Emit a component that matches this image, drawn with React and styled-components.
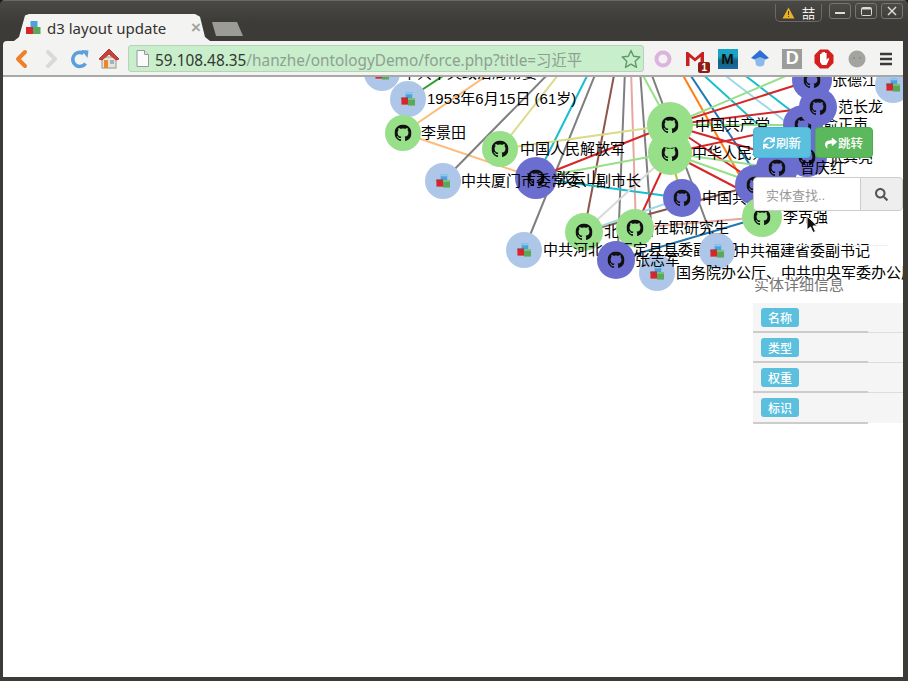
import React from "react";
import styled, { createGlobalStyle } from "styled-components";
import { FaSync, FaShare, FaSearch } from "react-icons/fa";

const GlobalStyle = createGlobalStyle`
  html, body { margin: 0; padding: 0; background: #1c1b19; overflow: hidden; }
  body { font-family: "Liberation Sans", "Noto Sans CJK SC", sans-serif; }
  * { box-sizing: border-box; }
`;

const GITHUB_PATH =
  "M8 0C3.58 0 0 3.58 0 8c0 3.54 2.29 6.53 5.47 7.59.4.07.55-.17.55-.38 0-.19-.01-.82-.01-1.49-2.01.37-2.53-.49-2.69-.94-.09-.23-.48-.94-.82-1.13-.28-.15-.68-.52-.01-.53.63-.01 1.08.58 1.23.82.72 1.21 1.87.87 2.33.66.07-.52.28-.87.51-1.07-1.78-.2-3.64-.89-3.64-3.95 0-.87.31-1.59.82-2.15-.08-.2-.36-1.02.08-2.12 0 0 .67-.21 2.2.82.64-.18 1.32-.27 2-.27.68 0 1.36.09 2 .27 1.53-1.04 2.2-.82 2.2-.82.44 1.1.16 1.92.08 2.12.51.56.82 1.27.82 2.15 0 3.07-1.87 3.75-3.65 3.95.29.25.54.73.54 1.48 0 1.07-.01 1.93-.01 2.2 0 .21.15.46.55.38A8.013 8.013 0 0016 8c0-4.42-3.58-8-8-8z";

// window chrome
const Frame = styled.div`
  width: 908px;
  height: 681px;
  display: flex;
  flex-direction: column;
  background: #3c3b37;
  border-radius: 5px 5px 0 0;
  overflow: hidden;
`;
const TitleBar = styled.div`
  height: 41px;
  flex: none;
  position: relative;
  display: flex;
  align-items: flex-end;
  padding-left: 14px;
  border-top: 1px solid #6a6964;
  background: linear-gradient(#4a4945, #3c3b37 22px);
`;
const Tab = styled.div`
  width: 196px;
  height: 27px;
  display: flex;
  align-items: center;
  gap: 6px;
  padding: 0 9px 0 11px;
  background: #f3f3f2;
  clip-path: polygon(0 100%, 5px 85%, 11px 6%, 15px 0, 181px 0, 186px 10%, 191px 85%, 196px 100%);
`;
const TabTitle = styled.span`
  flex: 1;
  font-family: "Noto Sans", sans-serif;
  font-size: 15px;
  color: #33322f;
  white-space: nowrap;
`;
const TabClose = styled.span`
  font-family: "Liberation Sans", sans-serif;
  font-size: 17px;
  font-weight: 700;
  color: #a3a3a0;
  line-height: 1;
`;
const NewTab = styled.div`
  width: 31px;
  height: 14px;
  margin: 0 0 5px 2px;
  background: #9b9c96;
  clip-path: polygon(4px 100%, 0 0, 25px 0, 31px 100%);
`;
const WindowButtons = styled.div`
  position: absolute;
  top: 2px;
  right: 5px;
  display: flex;
  gap: 4px;
`;
const AlertPill = styled.div`
  width: 47px;
  height: 18px;
  margin-right: 3px;
  margin-top: 1px;
  display: flex;
  align-items: center;
  justify-content: center;
  gap: 7px;
  border: 1px solid #6a6964;
  border-top: none;
  border-radius: 0 0 5px 5px;
  color: #f2f1ef;
  font-size: 13px;
`;
const WinButton = styled.div`
  width: 22px;
  height: 16px;
  display: flex;
  align-items: center;
  justify-content: center;
  border: 1px solid #77766f;
  border-radius: 3px;
  background: linear-gradient(#4c4b46, #403f3b);
`;
const Toolbar = styled.div`
  height: 36px;
  flex: none;
  margin: 0 5px 0 3px;
  display: flex;
  align-items: center;
  padding: 1px 0 0 7px;
  background: #f3f3f2;
  border-bottom: 2px solid #a8a8a6;
  border-radius: 4px 0 0 0;
`;
const NavIcons = styled.div`
  display: flex;
  align-items: center;
  gap: 8px;
  width: 118px;
  flex: none;
`;
const AddressBar = styled.div`
  width: 516px;
  height: 27px;
  flex: none;
  display: flex;
  align-items: center;
  gap: 6px;
  padding: 0 2px 0 7px;
  background: #c8eecb;
  border: 1px solid #b6d3b8;
  border-radius: 3px;
`;
const Url = styled.div`
  flex: 1;
  font-family: "Noto Sans", "Noto Sans CJK SC", sans-serif;
  font-size: 15.35px;
  color: #8f9f92;
  white-space: nowrap;
  overflow: hidden;
`;
const Host = styled.span`
  color: #33382f;
`;
const Extensions = styled.div`
  flex: 1;
  display: flex;
  align-items: center;
  justify-content: space-between;
  padding: 0 10px 0 9px;
`;
const ExtBox = styled.div`
  position: relative;
  width: ${(p) => p.$w || 20}px;
  height: 20px;
  display: flex;
  align-items: center;
  justify-content: center;
  font-weight: 700;
  font-size: ${(p) => p.$size || 16}px;
  color: ${(p) => p.$color || "#fff"};
  background: ${(p) => p.$bg || "transparent"};
`;
const MailBadge = styled.span`
  position: absolute;
  right: -5px;
  bottom: -4px;
  width: 12px;
  height: 11px;
  border-radius: 2px;
  background: #8e1d16;
  color: #fff;
  font-size: 10px;
  line-height: 11px;
  text-align: center;
`;

// page
const Viewport = styled.div`
  flex: 1;
  position: relative;
  margin: 0 5px 4px 3px;
  background: #fff;
  overflow: hidden;
`;
const GraphCanvas = styled.svg`
  position: absolute;
  left: 0;
  top: 0;
`;
const NodeLabel = styled.text`
  font-family: "Liberation Sans", "Noto Sans CJK SC", sans-serif;
  font-size: 15px;
  fill: #000;
`;
const SidePanel = styled.div`
  position: absolute;
  left: 750px;
  top: 50px;
  width: 150px;
`;
const ButtonRow = styled.div`
  display: flex;
  gap: 4px;
`;
const ActionButton = styled.button`
  width: 58px;
  height: 31px;
  padding: 0;
  display: flex;
  align-items: center;
  justify-content: center;
  gap: 1px;
  border: 1px solid ${(p) => p.$border};
  border-radius: 4px;
  background: ${(p) => p.$bg};
  color: #fff;
  font-family: inherit;
  font-size: 12.5px;
  font-weight: 500;
`;
const SearchGroup = styled.div`
  display: flex;
  height: 34px;
  margin-top: 19px;
`;
const SearchInput = styled.div`
  width: 108px;
  display: flex;
  align-items: center;
  padding-left: 12px;
  background: #fff;
  border: 1px solid #ccc;
  border-radius: 4px 0 0 4px;
  color: #999;
  font-size: 13px;
`;
const SearchButton = styled.div`
  flex: 1;
  display: flex;
  align-items: center;
  justify-content: center;
  margin-left: -1px;
  background: #eee;
  border: 1px solid #ccc;
  border-radius: 0 4px 4px 0;
  color: #555;
  font-size: 14px;
`;
const Rule = styled.div`
  width: 135px;
  height: 1px;
  margin-top: 34px;
  background: #eee;
`;
const DetailTitle = styled.div`
  margin: 30px 0 10px 1px;
  height: 17px;
  line-height: 17px;
  font-size: 15px;
  color: #777;
`;
const DetailRow = styled.div`
  position: relative;
  height: 30px;
  padding: 5px 0 0 8px;
  background: #f5f5f5;
  border-bottom: 1px solid #ddd;
  &:last-child {
    border-bottom: none;
  }
  &::after {
    content: "";
    position: absolute;
    left: 0;
    bottom: -1px;
    width: 115px;
    height: 2px;
    background: #ccc;
  }
`;
const Badge = styled.span`
  display: inline-flex;
  width: 38px;
  height: 19px;
  align-items: center;
  justify-content: center;
  border-radius: 3px;
  background: #5bc0de;
  color: #fff;
  font-size: 12px;
  font-weight: 500;
`;
const Pointer = styled.svg`
  position: absolute;
  left: 803px;
  top: 138px;
`;

const EDGES = [
  [408, 99, 452, 70, "#2ca02c"],
  [403, 133, 495, 70, "#ffbb78"],
  [403, 133, 536, 178, "#ffbb78"],
  [443, 181, 552, 70, "#7f7f7f"],
  [500, 149, 562, 70, "#dbdb8d"],
  [536, 178, 590, 70, "#17becf"],
  [524, 250, 597, 70, "#7f7f7f"],
  [584, 232, 615, 70, "#8c564b"],
  [625, 70, 618, 247, "#7f7f7f"],
  [631, 70, 636, 228, "#e6a89e"],
  [640, 70, 652, 237, "#7f7f7f"],
  [650, 70, 717, 251, "#7f7f7f"],
  [640, 70, 670, 125, "#98df8a"],
  [680, 70, 745, 185, "#ff7f0e"],
  [687, 70, 760, 180, "#1f77b4"],
  [698, 70, 775, 140, "#17becf"],
  [718, 70, 790, 125, "#9edae5"],
  [738, 70, 790, 110, "#17becf"],
  [670, 125, 812, 80, "#d62728"],
  [670, 125, 818, 107, "#d62728"],
  [670, 125, 800, 70, "#98df8a"],
  [670, 125, 803, 125, "#98df8a"],
  [670, 125, 790, 160, "#d62728"],
  [670, 153, 760, 185, "#98df8a"],
  [670, 125, 760, 185, "#d62728"],
  [670, 153, 760, 200, "#d62728"],
  [670, 153, 777, 168, "#98df8a"],
  [670, 153, 777, 130, "#d62728"],
  [536, 178, 670, 125, "#d62728"],
  [500, 149, 670, 125, "#dbdb8d"],
  [536, 178, 670, 153, "#98df8a"],
  [536, 178, 682, 198, "#17becf"],
  [584, 232, 670, 153, "#d9d9d9"],
  [635, 228, 670, 153, "#d62728"],
  [682, 198, 670, 153, "#bcbd22"],
  [584, 232, 755, 185, "#8c564b"],
  [584, 232, 682, 198, "#9edae5"],
  [635, 228, 762, 217, "#e6a89e"],
  [616, 260, 762, 217, "#1f77b4"],
];

const PURPLE = "#6b6ecf";
const GREEN = "#98df8a";
const BLUE = "#aec7e8";

// painted in this order, later ones lie over earlier ones
const NODES = [
  { x: 382, y: 73, r: 18, c: BLUE, kind: "cube", label: "中共中央政治局常委", lx: 402 },
  { x: 408, y: 99, r: 18, c: BLUE, kind: "cube", label: "1953年6月15日 (61岁)", lx: 427 },
  { x: 403, y: 133, r: 18, c: GREEN, label: "李景田", lx: 421 },
  { x: 500, y: 149, r: 18, c: GREEN, label: "中国人民解放军", lx: 520 },
  { x: 536, y: 178, r: 21, c: PURPLE, label: "张云山", lx: 556 },
  { x: 443, y: 181, r: 18, c: BLUE, kind: "cube", label: "中共厦门市委常委、副市长", lx: 461 },
  { x: 584, y: 232, r: 19, c: GREEN, label: "北京", lx: 604 },
  { x: 635, y: 228, r: 19, c: GREEN, label: "在职研究生", lx: 654 },
  { x: 524, y: 250, r: 18, c: BLUE, kind: "cube", label: "中共河北省正定县县委副书记", lx: 543 },
  { x: 717, y: 251, r: 18, c: BLUE, kind: "cube", label: "中共福建省委副书记", lx: 735 },
  { x: 657, y: 273, r: 18, c: BLUE, kind: "cube", label: "国务院办公厅、中共中央军委办公厅", lx: 676 },
  { x: 616, y: 260, r: 19, c: PURPLE, label: "张志军", lx: 635 },
  { x: 670, y: 153, r: 22, c: GREEN, label: "中华人民共和国", lx: 692 },
  { x: 670, y: 125, r: 23, c: GREEN, label: "中国共产党", lx: 695 },
  { x: 682, y: 198, r: 19, c: PURPLE, label: "中国共产党", lx: 702 },
  { x: 807, y: 157, r: 20, c: PURPLE, label: "张其亮", lx: 828 },
  { x: 803, y: 125, r: 20, c: PURPLE, label: "俞正声", lx: 823 },
  { x: 812, y: 80, r: 20, c: PURPLE, label: "张德江", lx: 832 },
  { x: 818, y: 107, r: 19, c: PURPLE, label: "范长龙", lx: 838 },
  { x: 755, y: 185, r: 20, c: PURPLE },
  { x: 777, y: 168, r: 21, c: PURPLE, label: "曾庆红", lx: 800 },
  { x: 893, y: 85, r: 18, c: BLUE, kind: "cube" },
  { x: 762, y: 217, r: 20, c: GREEN, label: "李克强", lx: 783 },
];

const Cubes = ({ x = 0, y = 0, size = 15 }) => (
  <svg x={x} y={y} width={size} height={size} viewBox="0 0 16 16">
    <rect x="5.5" y="1" width="7" height="7" fill="#4aa3df" />
    <rect x="5.5" y="1" width="7" height="2" fill="#8ccbf0" />
    <rect x="1" y="6.5" width="7" height="7.5" fill="#d9252a" />
    <rect x="1" y="6.5" width="7" height="2" fill="#a9393b" />
    <rect x="8" y="7" width="7.5" height="8" fill="#5aa85a" />
    <rect x="8" y="7" width="7.5" height="2" fill="#7fbf7a" />
  </svg>
);

const GraphNode = ({ x, y, r, c, kind, label, lx }) => (
  <g>
    <circle cx={x} cy={y} r={r} fill={c} />
    {kind === "cube" ? (
      <Cubes x={x - 7.5} y={y - 7.5} />
    ) : (
      <svg x={x - 8.5} y={y - 8.5} width="17" height="17" viewBox="0 0 16 16">
        <path d={GITHUB_PATH} fill="#111" fillRule="evenodd" />
      </svg>
    )}
    {label && (
      <NodeLabel x={lx} y={y + 5}>
        {label}
      </NodeLabel>
    )}
  </g>
);

const DETAILS = ["名称", "类型", "权重", "标识"];

const BackIcon = () => (
  <svg width="22" height="22" viewBox="0 0 22 22">
    <path d="M15 4 L8 11 L15 18" fill="none" stroke="#f07f26" strokeWidth="4" strokeLinejoin="round" strokeLinecap="round" />
  </svg>
);
const ForwardIcon = () => (
  <svg width="22" height="22" viewBox="0 0 22 22">
    <path d="M8 4 L15 11 L8 18" fill="none" stroke="#d9d9d6" strokeWidth="4" strokeLinejoin="round" strokeLinecap="round" />
  </svg>
);
const ReloadIcon = () => (
  <svg width="20" height="20" viewBox="0 0 20 20">
    <path d="M15.5 14.5 A7 7 0 1 1 13.5 4.5" fill="none" stroke="#5b9fdc" strokeWidth="3.6" />
    <path d="M11.5 1 L18.5 1.5 L17.5 9 Z" fill="#5b9fdc" />
  </svg>
);
const HomeIcon = () => (
  <svg width="22" height="21" viewBox="0 0 22 21">
    <rect x="4" y="9" width="14" height="11" fill="#e9e4da" stroke="#9a948a" />
    <rect x="6" y="12" width="4" height="8" fill="#e8872b" />
    <rect x="12" y="12" width="4" height="4" fill="#9fb4c2" />
    <path d="M1 11 L11 1 L21 11 L18 12 L11 6 L4 12 Z" fill="#c8433c" stroke="#b5352f" strokeLinejoin="round" />
  </svg>
);
const PageIcon = () => (
  <svg width="13" height="17" viewBox="0 0 13 17">
    <path d="M1 .5 H8.5 L12.5 4.5 V16.5 H1 Z" fill="#fbfbfb" stroke="#9a9a9a" />
    <path d="M8.5 .5 V4.5 H12.5" fill="#e2e2e2" stroke="#9a9a9a" />
  </svg>
);
const StarIcon = () => (
  <svg width="20" height="20" viewBox="0 0 20 20">
    <path d="M10 1.5 L12.6 7.3 L18.8 8 L14.2 12.2 L15.5 18.4 L10 15.2 L4.5 18.4 L5.8 12.2 L1.2 8 L7.4 7.3 Z" fill="none" stroke="#5f9a68" strokeWidth="1.4" strokeLinejoin="round" />
  </svg>
);

const Chrome = () => (
  <>
    <TitleBar>
      <Tab>
        <svg width="16" height="16" viewBox="0 0 16 16" style={{ flex: "none" }}>
          <rect x="5.5" y="1" width="7" height="7" fill="#4aa3df" />
          <rect x="1" y="7" width="7" height="7" fill="#d9252a" />
          <rect x="8" y="7" width="7.5" height="7" fill="#5aa85a" />
        </svg>
        <TabTitle>d3 layout update</TabTitle>
        <TabClose>×</TabClose>
      </Tab>
      <NewTab />
      <WindowButtons>
        <AlertPill>
          <svg width="13" height="12" viewBox="0 0 13 12">
            <path d="M6.5 .5 L12.5 11.5 H.5 Z" fill="#e9b021" />
            <rect x="6" y="4" width="1" height="4" fill="#3c3b37" />
            <rect x="6" y="9" width="1" height="1" fill="#3c3b37" />
          </svg>
          喆
        </AlertPill>
        <WinButton>
          <svg width="10" height="8" viewBox="0 0 10 8">
            <rect y="5" width="10" height="2" fill="#dfdbd2" />
          </svg>
        </WinButton>
        <WinButton>
          <svg width="11" height="9" viewBox="0 0 11 9">
            <rect x=".5" y=".5" width="10" height="8" rx="1" fill="none" stroke="#dfdbd2" />
            <rect x="1" y="1" width="9" height="1.5" fill="#dfdbd2" />
          </svg>
        </WinButton>
        <WinButton>
          <svg width="10" height="10" viewBox="0 0 10 10">
            <path d="M1 1 L9 9 M9 1 L1 9" stroke="#dfdbd2" strokeWidth="1.5" />
          </svg>
        </WinButton>
      </WindowButtons>
    </TitleBar>
    <Toolbar>
      <NavIcons>
        <BackIcon />
        <ForwardIcon />
        <ReloadIcon />
        <HomeIcon />
      </NavIcons>
      <AddressBar>
        <PageIcon />
        <Url>
          <Host>59.108.48.35</Host>/hanzhe/ontologyDemo/force.php?title=习近平
        </Url>
        <StarIcon />
      </AddressBar>
      <Extensions>
        <svg width="20" height="20" viewBox="0 0 20 20">
          <circle cx="10" cy="10" r="6.5" fill="none" stroke="#dcb3de" strokeWidth="4" />
        </svg>
        <ExtBox>
          <svg width="20" height="16" viewBox="0 0 20 16">
            <path d="M1 15 V1 H3 L10 7 L17 1 H19 V15 H15.5 V6 L10 10.5 L4.5 6 V15 Z" fill="#c8201e" />
          </svg>
          <MailBadge>1</MailBadge>
        </ExtBox>
        <ExtBox $bg="linear-gradient(#19a3c4 0 35%, #10637f 60%, #1d6aa5)" $color="#111" $size={15}>
          M
        </ExtBox>
        <svg width="20" height="20" viewBox="0 0 20 20">
          <path d="M10 1 L19 9 L14 11 L10 9 L6 11 L1 9 Z" fill="#2d6fd2" />
          <path d="M5 10 L10 8 L15 10 L14 16 Q10 19 6 16 Z" fill="#8cb8ea" />
        </svg>
        <ExtBox $bg="#9c9c9a" $size={18}>
          D
        </ExtBox>
        <svg width="20" height="20" viewBox="0 0 20 20">
          <path d="M6 .5 H14 L19.5 6 V14 L14 19.5 H6 L.5 14 V6 Z" fill="#d3201d" />
          <path d="M6 10 V5 H7.5 V9 V3.5 H9.2 V9 V3 H11 V9 V4 H12.6 V11 L14 9 L15.3 9.8 L12.5 16 H8 L6 13 Z" fill="#fff" />
        </svg>
        <svg width="20" height="20" viewBox="0 0 20 20">
          <circle cx="10" cy="10" r="8.5" fill="#a3a3a0" />
          <circle cx="7" cy="9" r="1" fill="#8a8a87" />
          <circle cx="13" cy="9" r="1" fill="#8a8a87" />
        </svg>
        <svg width="14" height="14" viewBox="0 0 14 14">
          <path d="M1 2 H13 M1 7 H13 M1 12 H13" stroke="#3a3a38" strokeWidth="2.4" />
        </svg>
      </Extensions>
    </Toolbar>
  </>
);

export default function App() {
  return (
    <Frame>
      <GlobalStyle />
      <Chrome />
      <Viewport>
        {/* viewBox is in screen coordinates so the graph data reads the same as the picture */}
        <GraphCanvas width="900" height="600" viewBox="3 77 900 600">
          {EDGES.map(([x1, y1, x2, y2, color], i) => (
            <line key={i} x1={x1} y1={y1} x2={x2} y2={y2} stroke={color} strokeWidth="2" />
          ))}
          {NODES.map((n, i) => (
            <GraphNode key={i} {...n} />
          ))}
        </GraphCanvas>
        <SidePanel>
          <ButtonRow>
            <ActionButton $bg="#5bc0de" $border="#46b8da">
              <FaSync size={12} />
              刷新
            </ActionButton>
            <ActionButton $bg="#5cb85c" $border="#4cae4c">
              <FaShare size={12} />
              跳转
            </ActionButton>
          </ButtonRow>
          <SearchGroup>
            <SearchInput>实体查找..</SearchInput>
            <SearchButton>
              <FaSearch size={13} />
            </SearchButton>
          </SearchGroup>
          <Rule />
          <DetailTitle>实体详细信息</DetailTitle>
          {DETAILS.map((d) => (
            <DetailRow key={d}>
              <Badge>{d}</Badge>
            </DetailRow>
          ))}
        </SidePanel>
        <Pointer width="14" height="20" viewBox="0 0 14 20">
          <path d="M1 1 V15 L4.5 12 L7 17.5 L9.5 16.5 L7 11 H11.5 Z" fill="#111" stroke="#fff" strokeWidth="1" />
        </Pointer>
      </Viewport>
    </Frame>
  );
}
